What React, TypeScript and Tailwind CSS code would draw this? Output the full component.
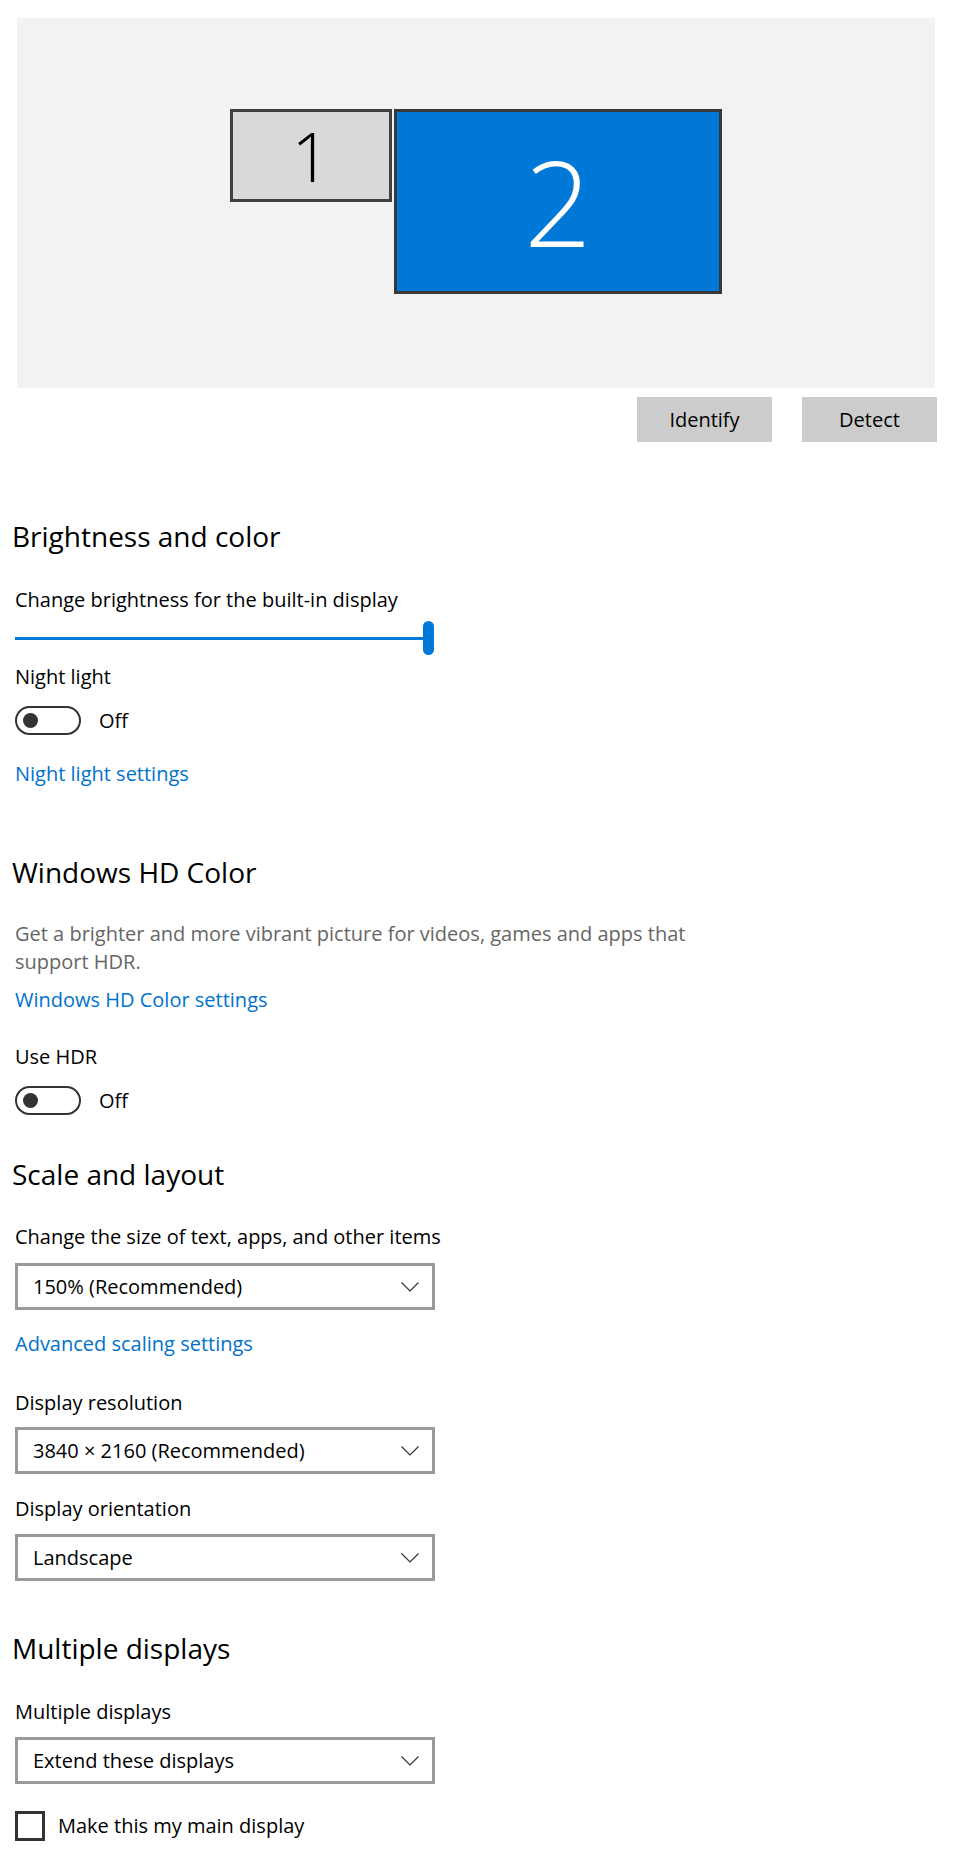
import React from "react";

const FONT = { fontFamily: '"Open Sans", "Noto Sans", sans-serif' };

function Chevron() {
  return (
    <svg width="18" height="10" viewBox="0 0 18 10" fill="none" className="shrink-0">
      <path d="M0.5 0.5 L9 9 L17.5 0.5" stroke="#333333" strokeWidth="1.2" />
    </svg>
  );
}

function Dropdown({ value, className = "" }: { value: string; className?: string }) {
  return (
    <div
      className={`w-[420px] h-[47px] border-[3px] border-[#999999] bg-white flex items-center justify-between pl-[15px] pr-[13px] ${className}`}
    >
      <span className="text-[20px] leading-[28px] text-black">{value}</span>
      <Chevron />
    </div>
  );
}

function Toggle({ className = "" }: { className?: string }) {
  return (
    <div className={`flex items-center ${className}`}>
      <div className="w-[66px] h-[29px] rounded-full border-2 border-[#333333] flex items-center pl-[6px]">
        <div className="w-[15px] h-[15px] rounded-full bg-[#333333]" />
      </div>
      <span className="ml-[18px] text-[20px] leading-[28px] text-black">Off</span>
    </div>
  );
}

function Heading({ children, className = "" }: { children: React.ReactNode; className?: string }) {
  return (
    <h2 className={`-ml-[3px] text-[28px] leading-[36px] font-normal text-black ${className}`}>{children}</h2>
  );
}

function Label({ children, className = "" }: { children: React.ReactNode; className?: string }) {
  return <p className={`text-[20px] leading-[28px] text-black ${className}`}>{children}</p>;
}

function Link({ children, className = "" }: { children: React.ReactNode; className?: string }) {
  return <p className={`text-[20px] leading-[28px] text-[#0072cc] ${className}`}>{children}</p>;
}

export default function App() {
  return (
    <div className="w-[963px] min-h-[1864px] bg-white text-black" style={FONT}>
      {/* display arrangement */}
      <div className="pt-[18px] pl-[17px] w-[937px]">
        <div className="w-[918px] h-[370px] bg-[#f2f2f2] flex justify-center items-start pt-[91px] gap-[2px]">
          <div className="w-[162px] h-[93px] bg-[#d9d9d9] border-[3px] border-[#3f3f3f] flex items-center justify-center">
            <span className="text-[68px] leading-none font-light text-black">1</span>
          </div>
          <div className="w-[328px] h-[185px] bg-[#0078d7] border-[3px] border-[#383838] flex items-center justify-center">
            <span className="text-[118px] leading-none font-light text-white">2</span>
          </div>
        </div>
        <div className="flex justify-end gap-[30px] mt-[9px]">
          <button className="w-[135px] h-[45px] bg-[#cccccc] text-[20px] text-black">Identify</button>
          <button className="w-[135px] h-[45px] bg-[#cccccc] text-[20px] text-black">Detect</button>
        </div>
      </div>

      <div className="pl-[15px] flex flex-col items-start">
        {/* Brightness and color */}
        <Heading className="mt-[76px]">Brightness and color</Heading>
        <Label className="mt-[32px]">Change brightness for the built-in display</Label>
        <div className="mt-[7px] w-[419px] h-[34px] flex items-center">
          <div className="flex-1 h-[3px] bg-[#0078d7]" />
          <div className="w-[11px] h-[34px] rounded-full bg-[#0078d7]" />
        </div>
        <Label className="mt-[8px]">Night light</Label>
        <Toggle className="mt-[15px]" />
        <Link className="mt-[25px]">Night light settings</Link>

        {/* Windows HD Color */}
        <Heading className="mt-[66px]">Windows HD Color</Heading>
        <p className="mt-[30px] w-[690px] text-[20px] leading-[28px] text-[#666666]">
          Get a brighter and more vibrant picture for videos, games and apps that support HDR.
        </p>
        <Link className="mt-[10px]">Windows HD Color settings</Link>
        <Label className="mt-[29px]">Use HDR</Label>
        <Toggle className="mt-[15px]" />

        {/* Scale and layout */}
        <Heading className="mt-[41px]">Scale and layout</Heading>
        <Label className="mt-[31px]">Change the size of text, apps, and other items</Label>
        <Dropdown value="150% (Recommended)" className="mt-[12px]" />
        <Link className="mt-[20px]">Advanced scaling settings</Link>
        <Label className="mt-[31px]">Display resolution</Label>
        <Dropdown value="3840 × 2160 (Recommended)" className="mt-[10px]" />
        <Label className="mt-[21px]">Display orientation</Label>
        <Dropdown value="Landscape" className="mt-[11px]" />

        {/* Multiple displays */}
        <Heading className="mt-[49px]">Multiple displays</Heading>
        <Label className="mt-[32px]">Multiple displays</Label>
        <Dropdown value="Extend these displays" className="mt-[11px]" />
        <div className="mt-[27px] flex items-center">
          <div className="w-[30px] h-[30px] border-[3px] border-[#333333] bg-white" />
          <span className="ml-[13px] text-[20px] leading-[28px] text-black">Make this my main display</span>
        </div>
      </div>
    </div>
  );
}
